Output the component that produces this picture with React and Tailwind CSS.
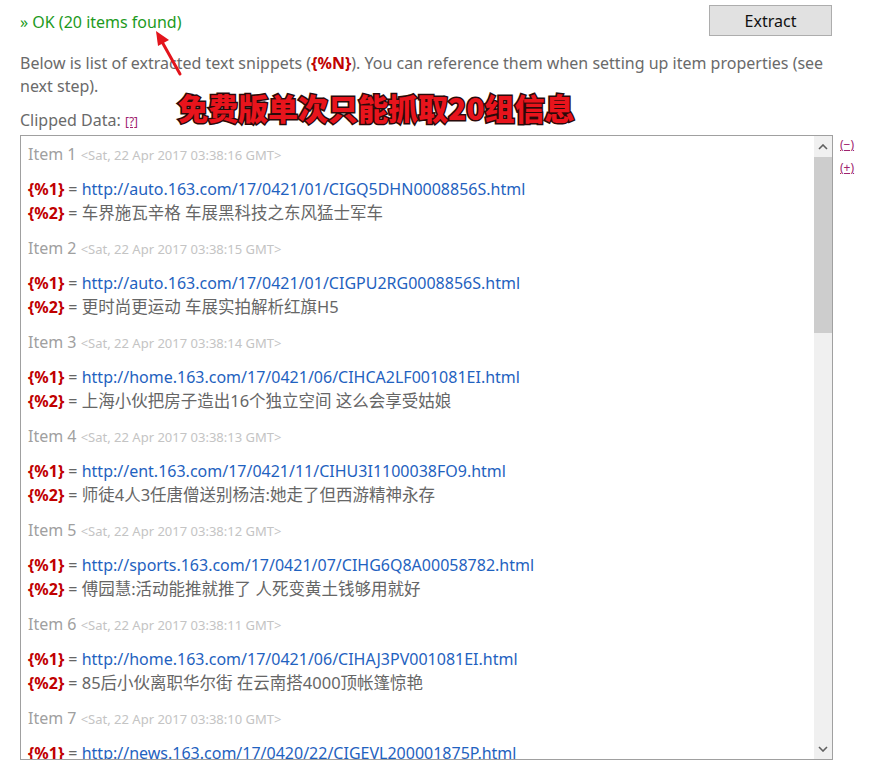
import React from "react";

const items = [
  { n: 1, t: "03:38:16", url: "http://auto.163.com/17/0421/01/CIGQ5DHN0008856S.html", title: "车界施瓦辛格 车展黑科技之东风猛士军车" },
  { n: 2, t: "03:38:15", url: "http://auto.163.com/17/0421/01/CIGPU2RG0008856S.html", title: "更时尚更运动 车展实拍解析红旗H5" },
  { n: 3, t: "03:38:14", url: "http://home.163.com/17/0421/06/CIHCA2LF001081EI.html", title: "上海小伙把房子造出16个独立空间 这么会享受姑娘" },
  { n: 4, t: "03:38:13", url: "http://ent.163.com/17/0421/11/CIHU3I1100038FO9.html", title: "师徒4人3任唐僧送别杨洁:她走了但西游精神永存" },
  { n: 5, t: "03:38:12", url: "http://sports.163.com/17/0421/07/CIHG6Q8A00058782.html", title: "傅园慧:活动能推就推了 人死变黄土钱够用就好" },
  { n: 6, t: "03:38:11", url: "http://home.163.com/17/0421/06/CIHAJ3PV001081EI.html", title: "85后小伙离职华尔街 在云南搭4000顶帐篷惊艳" },
  { n: 7, t: "03:38:10", url: "http://news.163.com/17/0420/22/CIGEVL200001875P.html", title: "老人捡到钱包苦等失主 归还后拒收酬谢" },
];

const font = { fontFamily: '"Noto Sans", "Noto Sans CJK SC", sans-serif' };

function Item({ item }) {
  return (
    <div className="pb-[13px]">
      <div className="h-[23px] overflow-hidden leading-[23px] text-[#a0a0a0] text-[16px] whitespace-nowrap">
        Item {item.n} <span className="text-[13px] text-[#c4c4c4]">&lt;Sat, 22 Apr 2017 {item.t} GMT&gt;</span>
      </div>
      <div className="mt-[12px] text-[16px] whitespace-nowrap">
        <div className="h-[23px] leading-[23px]">
          <span className="font-bold text-[#c00000]">{"{%1}"}</span>
          <span className="text-[#666]"> = </span>
          <span className="text-[#1f62c0]">{item.url}</span>
        </div>
        <div className="h-[23px] leading-[23px]">
          <span className="font-bold text-[#c00000]">{"{%2}"}</span>
          <span className="text-[#666]"> = </span>
          <span className="text-[16.5px] leading-[23px] text-[#666]">{item.title}</span>
        </div>
      </div>
    </div>
  );
}

export default function App() {
  return (
    <div className="relative min-h-screen bg-white pl-[20px] pt-[5px]" style={font}>
      {/* status + button */}
      <div className="flex w-[812px] items-start justify-between">
        <div className="mt-[6px] text-[16px] leading-[23px] text-[#1d9a1d]">» OK (20 items found)</div>
        <button className="h-[31px] w-[123px] border border-[#adadad] bg-[#e1e1e1] pt-[1px] text-[16px] text-[#111]">Extract</button>
      </div>

      {/* description */}
      <p className="mt-[16px] w-[830px] text-[16px] leading-[23px] text-[#6a6a6a]">
        Below is list of extracted text snippets (<span className="font-bold text-[#c00000]">{"{%N}"}</span>). You can reference them when setting up item properties (see next step).
      </p>

      <div className="mt-[11px] text-[16px] leading-[23px] text-[#6a6a6a]">
        Clipped Data: <span className="text-[12px] text-[#a0236e] underline">[?]</span>
      </div>

      {/* data box */}
      <div className="mt-[2px] flex items-start">
        <div className="flex h-[625px] w-[813px] border border-[#a0a0a0]">
          <div className="flex-1 overflow-hidden pl-[7px] pt-[7px]">
            {items.map((it) => (
              <Item key={it.n} item={it} />
            ))}
          </div>
          <div className="flex w-[18px] flex-col bg-[#f0f0f0]">
            <div className="flex h-[21px] items-center justify-center">
              <svg width="10" height="6" viewBox="0 0 10 6"><path d="M1 5 L5 1 L9 5" fill="none" stroke="#606060" strokeWidth="1.6" /></svg>
            </div>
            <div className="h-[176px] bg-[#cdcdcd]" />
            <div className="flex-1" />
            <div className="flex h-[21px] items-center justify-center">
              <svg width="10" height="6" viewBox="0 0 10 6"><path d="M1 1 L5 5 L9 1" fill="none" stroke="#606060" strokeWidth="1.6" /></svg>
            </div>
          </div>
        </div>
        <div className="-mt-[2px] ml-[7px] flex flex-col text-[12px] leading-[23px] text-[#a0236e]">
          <span className="underline">(−)</span>
          <span className="underline">(+)</span>
        </div>
      </div>

      {/* annotation overlay */}
      <svg className="absolute left-[150px] top-[28px]" width="40" height="52" viewBox="0 0 40 52">
        <line x1="30" y1="46" x2="11" y2="12" stroke="#e3141c" strokeWidth="3" strokeLinecap="round" />
        <polygon points="6,3 19,12 8,18" fill="#e3141c" />
      </svg>
      <div
        className="absolute left-[178px] top-[88px] text-[30px] font-black leading-[38px] text-[#e8141c]"
        style={{ fontFamily: '"Noto Sans CJK SC", sans-serif', WebkitTextStroke: "3px #2a0a0a", paintOrder: "stroke fill" }}
      >
        免费版单次只能抓取20组信息
      </div>
    </div>
  );
}
